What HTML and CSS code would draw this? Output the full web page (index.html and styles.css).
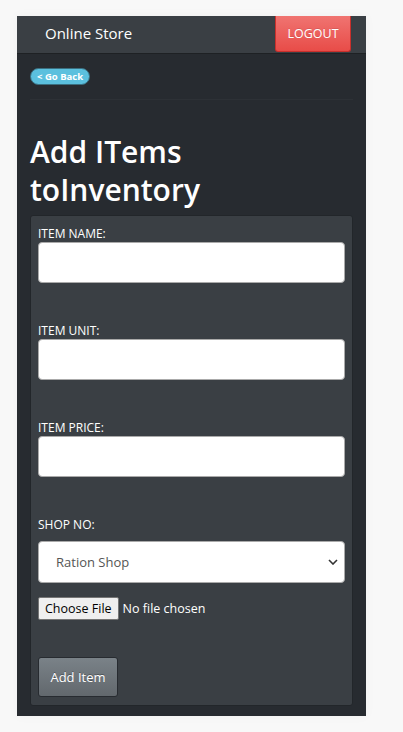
FILE: index.html
```html
<!DOCTYPE html>
<html>
<head>
<meta charset="utf-8">
<link rel="stylesheet" href="styles.css">
</head>
<body>
<div class="app">
  <nav class="navbar">
    <span class="brand">Online Store</span>
    <button class="btn-logout">LOGOUT</button>
  </nav>
  <main class="content">
    <div class="back-row">
      <button class="btn-back">&lt; Go Back</button>
    </div>
    <h1 class="title">Add ITems toInventory</h1>
    <form class="card">
      <div class="group">
        <label class="label">ITEM NAME:</label>
        <input class="field" type="text">
      </div>
      <div class="group">
        <label class="label">ITEM UNIT:</label>
        <input class="field" type="text">
      </div>
      <div class="group">
        <label class="label">ITEM PRICE:</label>
        <input class="field" type="text">
      </div>
      <div class="group">
        <label class="label">SHOP NO:</label>
        <div class="select">
          <span>Ration Shop</span>
          <svg width="10" height="6" viewBox="0 0 10 6"><path d="M1 1 L5 5 L9 1" fill="none" stroke="#333" stroke-width="1.6"/></svg>
        </div>
      </div>
      <div class="file-row">
        <span class="file-btn">Choose File</span>
        <span class="file-text">No file chosen</span>
      </div>
      <button class="btn-add" type="button">Add Item</button>
    </form>
  </main>
</div>
</body>
</html>
```

FILE: styles.css
```css
* { box-sizing: border-box; }
html, body { margin: 0; padding: 0; }
body {
  background: #f8f8f8;
  font-family: "Open Sans", "Noto Sans", sans-serif;
  padding: 16px 0 0 17px;
  height: 732px;
}
.app {
  width: 349px;
  height: 700px;
  background: #272b30;
  box-shadow: 0 0 10px rgba(0,0,0,0.04);
}
.navbar {
  height: 38px;
  background: #3a3f44;
  border-bottom: 1px solid #1e2124;
  display: flex;
  align-items: flex-start;
  justify-content: space-between;
  padding: 0 15px 0 28px;
}
.brand {
  color: #fff;
  font-size: 15px;
  line-height: 34px;
}
.btn-logout {
  width: 76px;
  height: 36px;
  border: 1px solid #c9302c;
  border-top: none;
  border-radius: 0 0 3px 3px;
  background: linear-gradient(#f07471, #e84c48);
  color: #fff;
  font-family: inherit;
  font-size: 12.5px;
  padding: 0;
  text-shadow: 0 -1px 0 rgba(0,0,0,0.1);
}
.content {
  padding: 14px 13px 0 13px;
}
.back-row {
  display: flex;
  padding-bottom: 14px;
  border-bottom: 1px solid #2d3136;
}
.btn-back {
  height: 17px;
  padding: 0 6px;
  border-radius: 9px;
  border: 1px solid #3a6f80;
  background: #5bc0de;
  color: #fff;
  font-family: inherit;
  font-weight: 700;
  font-size: 9.5px;
  line-height: 14px;
}
.title {
  margin: 33px 0 6px 0;
  color: #fff;
  font-size: 30px;
  font-weight: 600;
  line-height: 38px;
  width: 200px;
}
.card {
  background: #3a3f44;
  border: 1px solid #22262a;
  border-radius: 3px;
  padding: 10px 7px 8px 7px;
  display: flex;
  flex-direction: column;
}
.group {
  display: flex;
  flex-direction: column;
  margin-bottom: 40px;
}
.group:nth-child(4) { margin-bottom: 14px; }
.label {
  color: #fff;
  font-size: 12px;
  line-height: 16px;
}
.field {
  height: 41px;
  border: 1px solid #aaa;
  border-radius: 4px;
  background: #fff;
}
.select {
  height: 42px;
  border: 1px solid #aaa;
  border-radius: 4px;
  background: #fff;
  display: flex;
  align-items: center;
  justify-content: space-between;
  padding: 0 6px 0 17px;
  color: #555;
  font-size: 13px;
  margin-top: 8px;
}
.file-row {
  display: flex;
  align-items: center;
  gap: 4px;
  height: 22px;
}
.file-btn {
  height: 23px;
  border: 1px solid #767676;
  border-radius: 2px;
  background: #efefef;
  color: #000;
  font-size: 12.5px;
  line-height: 21px;
  padding: 0 6px;
}
.file-text {
  color: #fff;
  font-size: 12.5px;
}
.btn-add {
  margin-top: 38px;
  width: 80px;
  height: 40px;
  border: 1px solid #272b30;
  border-radius: 3px;
  background: linear-gradient(#7a8288, #62686d);
  color: #fff;
  font-family: inherit;
  font-size: 13px;
  text-shadow: 0 -1px 0 rgba(0,0,0,0.3);
}
```
